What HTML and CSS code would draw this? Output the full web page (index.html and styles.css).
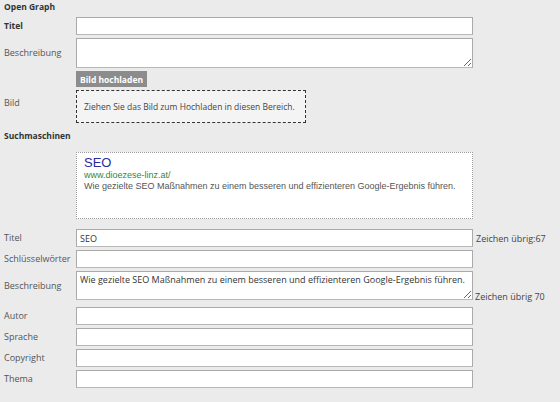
FILE: index.html
```html
<!DOCTYPE html>
<html lang="de">
<head>
    <meta charset="UTF-8">
    <title>Seiteneinstellungen</title>
    <link rel="stylesheet" href="styles.css">
</head>
<body>
    <form class="settings">
        <h3 class="section-title">Open Graph</h3>

        <div class="row">
            <label class="strong">Titel</label>
            <input type="text" class="field">
        </div>
        <div class="row">
            <label>Beschreibung</label>
            <textarea class="field area"></textarea>
        </div>
        <div class="row">
            <label></label>
            <button type="button" class="btn-upload">Bild hochladen</button>
        </div>
        <div class="row">
            <label class="label-up">Bild</label>
            <div class="dropzone">Ziehen Sie das Bild zum Hochladen in diesen Bereich.</div>
        </div>

        <h3 class="section-title seo-title">Suchmaschinen</h3>

        <div class="row row-serp">
            <label></label>
            <div class="field serp">
                <div class="serp-title">SEO</div>
                <div class="serp-url">www.dioezese-linz.at/</div>
                <div class="serp-desc">Wie gezielte SEO Maßnahmen zu einem besseren und effizienteren Google-Ergebnis führen.</div>
            </div>
        </div>

        <div class="row row-first">
            <label>Titel</label>
            <input type="text" class="field" value="SEO">
            <span class="note">Zeichen übrig:67</span>
        </div>
        <div class="row">
            <label>Schlüsselwörter</label>
            <input type="text" class="field">
        </div>
        <div class="row row-end">
            <label>Beschreibung</label>
            <textarea class="field area area-sm">Wie gezielte SEO Maßnahmen zu einem besseren und effizienteren Google-Ergebnis führen.</textarea>
            <span class="note note-low">Zeichen übrig 70</span>
        </div>
        <div class="row row-after">
            <label>Autor</label>
            <input type="text" class="field">
        </div>
        <div class="row">
            <label>Sprache</label>
            <input type="text" class="field">
        </div>
        <div class="row">
            <label>Copyright</label>
            <input type="text" class="field">
        </div>
        <div class="row">
            <label>Thema</label>
            <input type="text" class="field">
        </div>
    </form>
</body>
</html>
```

FILE: styles.css
```css
* {
    margin: 0;
    padding: 0;
    box-sizing: border-box;
}

body {
    background: #ebebeb;
    font-family: "Open Sans", sans-serif;
    font-size: 9px;
    color: #555;
}

.settings {
    padding: 0 4px;
}

.section-title {
    font-size: 8.5px;
    font-weight: 700;
    line-height: 14px;
    color: #333;
}

.seo-title {
    margin-top: 6px;
}

.row {
    display: flex;
    align-items: center;
    margin-top: 3px;
}

.row label {
    width: 72px;
    flex: none;
    line-height: 12px;
}

.row label.strong {
    font-weight: 700;
    font-size: 8.5px;
    color: #333;
}

.row label.label-up {
    margin-bottom: 8px;
}

.row-serp {
    margin-top: 9px;
}

.row-first {
    margin-top: 10px;
}

.row-after {
    margin-top: 7px;
}

.row-end {
    align-items: flex-end;
}

.row-end label {
    align-self: center;
}

.field {
    width: 397px;
    height: 18px;
    flex: none;
    background: #fff;
    border: 1px solid #aaa;
    border-bottom-color: #b8b8b8;
    font-family: "Open Sans", sans-serif;
    font-size: 9px;
    color: #333;
    padding: 0 3px;
    outline: none;
}

.area {
    height: 30px;
    padding: 2px 3px;
    line-height: 12px;
    resize: vertical;
}

.area-sm {
    height: 29px;
}

.btn-upload {
    width: 71px;
    height: 16px;
    border: none;
    background: #8c8c8c;
    color: #fff;
    font-family: "Open Sans", sans-serif;
    font-size: 8.5px;
    font-weight: 700;
}

.dropzone {
    width: 230px;
    height: 33px;
    border: 1px dashed #333;
    background: #f4f4f4;
    color: #444;
    font-size: 8.5px;
    padding-left: 7px;
    display: flex;
    align-items: center;
    white-space: nowrap;
}

.serp {
    height: 67px;
    border: 1px dotted #9a9a9a;
    padding: 3px 7px;
    font-family: "Liberation Sans", Arial, sans-serif;
}

.serp-title {
    font-size: 13px;
    line-height: 14px;
    color: #2b2ba0;
}

.serp-url {
    font-size: 9px;
    line-height: 11px;
    color: #2f8a3a;
}

.serp-desc {
    font-size: 9px;
    line-height: 11px;
    color: #555;
}

.note {
    margin-left: 3px;
    color: #444;
    white-space: nowrap;
}

.note-low {
    margin-left: 2px;
    margin-bottom: -3px;
}
```
